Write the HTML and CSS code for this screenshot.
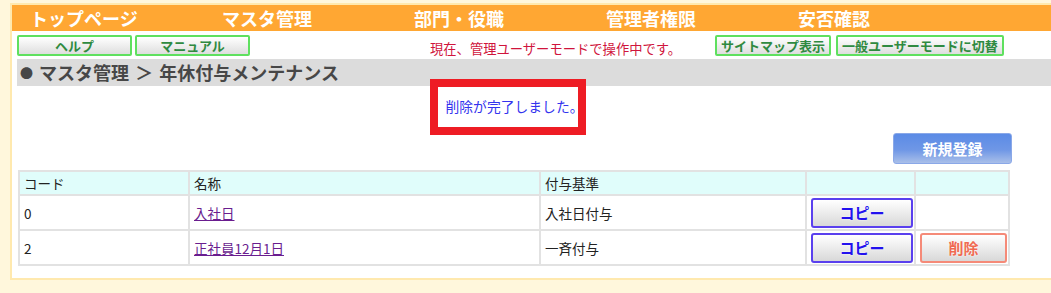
FILE: index.html
```html
<!DOCTYPE html>
<html lang="ja">
<head>
  <meta charset="UTF-8">
  <title>年休付与メンテナンス</title>
  <link rel="stylesheet" href="styles.css">
</head>
<body>
  <div class="frame">
    <div class="nav">
      <a class="nav-item">トップページ</a>
      <a class="nav-item">マスタ管理</a>
      <a class="nav-item">部門・役職</a>
      <a class="nav-item">管理者権限</a>
      <a class="nav-item">安否確認</a>
    </div>

    <div class="content">
      <div class="toolbar">
        <div class="tool-group">
          <button class="tool-btn wide">ヘルプ</button>
          <button class="tool-btn wide">マニュアル</button>
        </div>
        <span class="mode-msg">現在、管理ユーザーモードで操作中です。</span>
        <div class="tool-group right">
          <button class="tool-btn">サイトマップ表示</button>
          <button class="tool-btn">一般ユーザーモードに切替</button>
        </div>
      </div>

      <div class="breadcrumb"><span class="dot">●</span> マスタ管理 ＞ 年休付与メンテナンス</div>

      <div class="main">
        <p class="message">削除が完了しました。</p>

        <div class="actions">
          <button class="new-btn">新規登録</button>
        </div>

        <table class="list">
          <colgroup>
            <col class="c-code">
            <col class="c-name">
            <col class="c-base">
            <col class="c-copy">
            <col class="c-del">
          </colgroup>
          <thead>
            <tr>
              <th>コード</th>
              <th>名称</th>
              <th>付与基準</th>
              <th></th>
              <th></th>
            </tr>
          </thead>
          <tbody>
            <tr>
              <td>0</td>
              <td><a href="#">入社日</a></td>
              <td>入社日付与</td>
              <td><button class="row-btn copy">コピー</button></td>
              <td></td>
            </tr>
            <tr>
              <td>2</td>
              <td><a href="#">正社員12月1日</a></td>
              <td>一斉付与</td>
              <td><button class="row-btn copy">コピー</button></td>
              <td><button class="row-btn del">削除</button></td>
            </tr>
          </tbody>
        </table>
      </div>
    </div>

    <div class="highlight"></div>
  </div>
</body>
</html>
```

FILE: styles.css
```css
html, body {
  margin: 0;
  padding: 0;
}
body {
  background: #fff7dc;
  font-family: "Noto Sans CJK JP", "Noto Sans", sans-serif;
  color: #222;
  overflow: hidden;
}
.frame {
  position: relative;
  width: 1080px;
  margin: 3px 0 0 10px;
  background: #fff;
  border: 2px solid #ffe9ae;
}
.nav {
  display: flex;
  height: 26px;
  background: #ffa733;
}
.nav-item {
  width: 174px;
  padding-left: 18px;
  color: #fff;
  font-weight: bold;
  font-size: 18px;
  line-height: 26px;
  white-space: nowrap;
}
.content {
  padding: 0 0 12px 5px;
}
.toolbar {
  display: flex;
  align-items: flex-end;
  height: 28px;
  padding-top: 4px;
  box-sizing: border-box;
}
.tool-group {
  display: flex;
  gap: 3px;
  padding-bottom: 3px;
}
.tool-group.right {
  gap: 5px;
  margin-left: 34px;
}
.tool-btn {
  height: 21px;
  padding: 0 4px;
  border: 2px solid #5fe05f;
  border-radius: 2px;
  background: linear-gradient(#ffffff, #dedede);
  color: #2f8a40;
  font-family: inherit;
  font-weight: bold;
  font-size: 13px;
  line-height: 16px;
}
.tool-btn.wide {
  width: 115px;
}
.mode-msg {
  margin-left: 180px;
  color: #d0143c;
  font-size: 13.3px;
  line-height: 16px;
  padding-bottom: 2px;
  white-space: nowrap;
}
.breadcrumb {
  height: 27px;
  background: #dcdcdc;
  padding-left: 3px;
  color: #474747;
  font-weight: bold;
  font-size: 18px;
  line-height: 27px;
  word-spacing: 2px;
  white-space: nowrap;
}
.dot {
  font-size: 13px;
  vertical-align: 2px;
}
.main {
  width: 995px;
}
.message {
  margin: 0;
  padding: 10px 0 17px;
  text-align: center;
  color: #3333ee;
  font-size: 13.8px;
  line-height: 20px;
}
.actions {
  display: flex;
  justify-content: flex-end;
}
.new-btn {
  width: 119px;
  height: 31px;
  border: 1px solid #8aa8e8;
  border-radius: 3px;
  background: linear-gradient(#5b8be6, #6f97e6 55%, #a9bfe9);
  color: #fff;
  font-family: inherit;
  font-weight: bold;
  font-size: 15px;
}
.list {
  width: 990px;
  margin: 6px 0 0 1px;
  table-layout: fixed;
  border-collapse: collapse;
  border: 2px solid #dadada;
  font-size: 13.5px;
}
.list th, .list td {
  border: 2px solid #e2e2e2;
  padding: 0 4px;
  text-align: left;
  font-weight: normal;
  line-height: 18px;
}
.list th {
  height: 22px;
  background: #e0fdfb;
}
.list td {
  height: 33px;
}
.c-code { width: 170px; }
.c-name { width: 351px; }
.c-base { width: 266px; }
.c-copy { width: 109px; }
.c-del { width: 94px; }
.list a {
  color: #6a1d8f;
}
.row-btn {
  height: 30px;
  border-radius: 3px;
  background: linear-gradient(#ffffff, #d8d8d8);
  font-family: inherit;
  font-weight: bold;
  font-size: 15px;
  text-shadow: 0 0 2px #fff;
}
.copy {
  width: 102px;
  border: 2px solid #5a40ee;
  color: #2211ee;
}
.del {
  width: 87px;
  border: 2px solid #f58a78;
  color: #f06a52;
}
.highlight {
  position: absolute;
  left: 418px;
  top: 74px;
  width: 140px;
  height: 40px;
  border: 8px solid #ee1c24;
}
```
